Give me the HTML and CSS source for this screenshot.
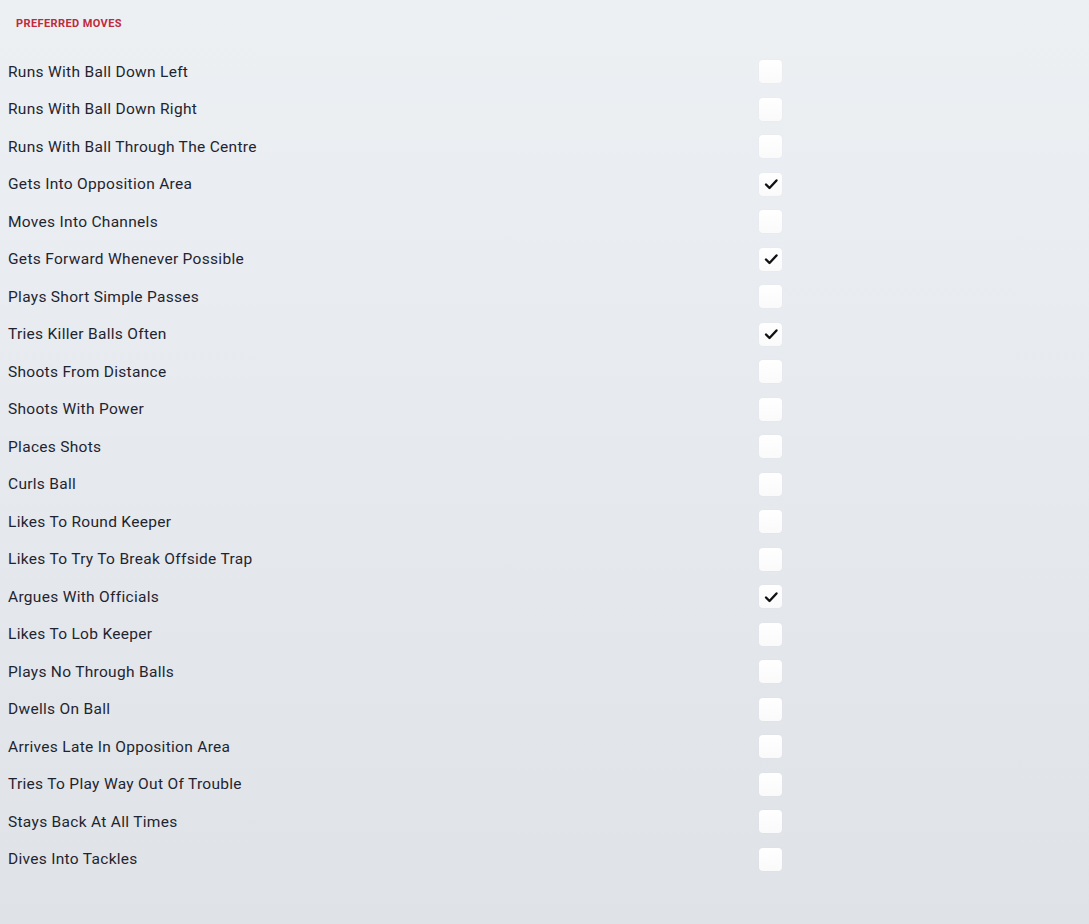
FILE: index.html
```html
<!DOCTYPE html>
<html>
<head>
<meta charset="utf-8">
<link rel="stylesheet" href="styles.css">
</head>
<body>
<div class="panel">
  <h2 class="title">PREFERRED MOVES</h2>
  <ul class="moves">
    <li class="move"><span>Runs With Ball Down Left</span><span class="box"></span></li>
    <li class="move"><span>Runs With Ball Down Right</span><span class="box"></span></li>
    <li class="move"><span>Runs With Ball Through The Centre</span><span class="box"></span></li>
    <li class="move"><span>Gets Into Opposition Area</span><span class="box on"><svg viewBox="0 0 16 16"><path d="M3 8.5 L6.5 12 L13.5 4.5"/></svg></span></li>
    <li class="move"><span>Moves Into Channels</span><span class="box"></span></li>
    <li class="move"><span>Gets Forward Whenever Possible</span><span class="box on"><svg viewBox="0 0 16 16"><path d="M3 8.5 L6.5 12 L13.5 4.5"/></svg></span></li>
    <li class="move"><span>Plays Short Simple Passes</span><span class="box"></span></li>
    <li class="move"><span>Tries Killer Balls Often</span><span class="box on"><svg viewBox="0 0 16 16"><path d="M3 8.5 L6.5 12 L13.5 4.5"/></svg></span></li>
    <li class="move"><span>Shoots From Distance</span><span class="box"></span></li>
    <li class="move"><span>Shoots With Power</span><span class="box"></span></li>
    <li class="move"><span>Places Shots</span><span class="box"></span></li>
    <li class="move"><span>Curls Ball</span><span class="box"></span></li>
    <li class="move"><span>Likes To Round Keeper</span><span class="box"></span></li>
    <li class="move"><span>Likes To Try To Break Offside Trap</span><span class="box"></span></li>
    <li class="move"><span>Argues With Officials</span><span class="box on"><svg viewBox="0 0 16 16"><path d="M3 8.5 L6.5 12 L13.5 4.5"/></svg></span></li>
    <li class="move"><span>Likes To Lob Keeper</span><span class="box"></span></li>
    <li class="move"><span>Plays No Through Balls</span><span class="box"></span></li>
    <li class="move"><span>Dwells On Ball</span><span class="box"></span></li>
    <li class="move"><span>Arrives Late In Opposition Area</span><span class="box"></span></li>
    <li class="move"><span>Tries To Play Way Out Of Trouble</span><span class="box"></span></li>
    <li class="move"><span>Stays Back At All Times</span><span class="box"></span></li>
    <li class="move"><span>Dives Into Tackles</span><span class="box"></span></li>
  </ul>
</div>
</body>
</html>
```
FILE: styles.css
```css
html, body {
  margin: 0;
  padding: 0;
}
body {
  width: 1089px;
  height: 924px;
  background: linear-gradient(180deg, #edf0f3 0%, #e6e9ee 50%, #dfe3e8 100%);
  font-family: Roboto, "Liberation Sans", sans-serif;
  color: #1f2530;
  overflow: hidden;
}
.panel {
  padding: 17px 0 0 8px;
}
.title {
  margin: 0 0 0 8px;
  font-size: 11px;
  line-height: 14px;
  font-weight: 700;
  color: #c02a3c;
  letter-spacing: 0.4px;
}
.moves {
  list-style: none;
  margin: 22px 0 0 0;
  padding: 0;
}
.move {
  display: flex;
  align-items: center;
  height: 37.5px;
  width: 774px;
  font-size: 15.5px;
  letter-spacing: 0.3px;
}
.move span:first-child {
  flex: 1;
}
.box {
  width: 23px;
  height: 23px;
  border-radius: 4px;
  background: linear-gradient(180deg, #ffffff 0%, #fafafa 100%);
  box-shadow: 0 0 1px rgba(0,0,0,0.08);
  display: flex;
  align-items: center;
  justify-content: center;
}
.box svg {
  width: 16px;
  height: 16px;
  fill: none;
  stroke: #111;
  stroke-width: 2.4;
  stroke-linecap: round;
  stroke-linejoin: round;
}
```
